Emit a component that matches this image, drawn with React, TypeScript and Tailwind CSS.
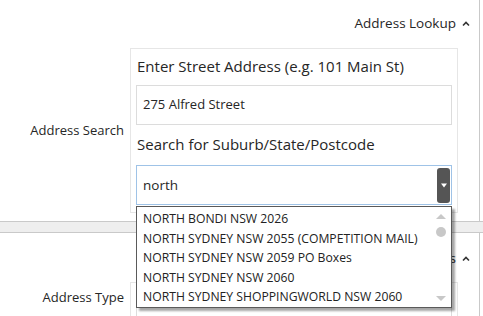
import React from "react";

const suburbs = [
  "NORTH BONDI NSW 2026",
  "NORTH SYDNEY NSW 2055 (COMPETITION MAIL)",
  "NORTH SYDNEY NSW 2059 PO Boxes",
  "NORTH SYDNEY NSW 2060",
  "NORTH SYDNEY SHOPPINGWORLD NSW 2060",
];

function ChevronUp() {
  return (
    <svg width="8" height="6" viewBox="0 0 8 6" className="ml-[6px] mt-[1px]">
      <polyline points="1,4.5 4,1.5 7,4.5" fill="none" stroke="#333" strokeWidth="1.6" />
    </svg>
  );
}

function PanelHeader({ title }: { title: string }) {
  return (
    <div className="flex justify-end items-center pr-[9px] text-[13.5px] leading-[20px]">
      <span>{title}</span>
      <ChevronUp />
    </div>
  );
}

export default function App() {
  return (
    <div className="h-[316px] bg-white text-[#262626] font-['Open_Sans',sans-serif] overflow-hidden">
      {/* Address Lookup panel */}
      <section className="w-[480px] border-r border-[#c9c9c9] pt-[13px] pb-[8px]">
        <PanelHeader title="Address Lookup" />
        <div className="flex mt-[15px]">
          <div className="w-[130px] shrink-0 flex items-center justify-end pr-[6px] text-[13px]">
            Address Search
          </div>
          <div className="w-[328px] border border-[#e6e6e6] px-[5px] pt-[7px] pb-[7px]">
            <div className="text-[15px] leading-[20px] pl-[1px]">Enter Street Address (e.g. 101 Main St)</div>
            <div className="mt-[9px] h-[40px] border border-[#dcdcdc] flex items-center px-[6px] text-[13px]">
              275 Alfred Street
            </div>
            <div className="mt-[9px] text-[15px] leading-[20px] pl-[1px]">Search for Suburb/State/Postcode</div>
            <div className="relative mt-[11px] h-[40px] border border-[#9fc3e7] flex items-center px-[6px] text-[13.5px]">
              north
              <div className="absolute right-[1px] top-[2px] bottom-[1px] w-[13px] rounded-[3px] bg-[#555] flex items-center justify-center">
                <svg width="6" height="5" viewBox="0 0 6 5">
                  <polygon points="0,0.5 6,0.5 3,4.5" fill="#fff" />
                </svg>
              </div>
              {/* suggestion list */}
              <div className="absolute left-[-1px] right-[-1px] top-full mt-[2px] z-10 bg-white border border-[#5a5a5a] shadow-[3px_3px_2px_rgba(0,0,0,0.35)] flex">
                <ul className="flex-1 pt-[2px] text-[12.2px] text-[#222]">
                  {suburbs.map((s) => (
                    <li key={s} className="h-[19.5px] leading-[19.5px] pl-[6px] whitespace-nowrap">
                      {s}
                    </li>
                  ))}
                </ul>
                <div className="w-[16px] mr-[2px] flex flex-col items-center justify-between pt-[7px] pb-[6px]">
                  <div className="flex flex-col items-center gap-[8px]">
                    <svg width="10" height="5" viewBox="0 0 10 5">
                      <polygon points="0,5 10,5 5,0" fill="#c8c8c8" />
                    </svg>
                    <div className="w-[10px] h-[10px] rounded-full bg-[#c8c8c8]" />
                  </div>
                  <svg width="10" height="5" viewBox="0 0 10 5">
                    <polygon points="0,0 10,0 5,5" fill="#c8c8c8" />
                  </svg>
                </div>
              </div>
            </div>
          </div>
        </div>
      </section>

      <div className="h-[12px] border-y border-[#c9c9c9] bg-[#eeeeee]" />

      {/* Address Details panel */}
      <section className="w-[480px] border-r border-[#c9c9c9] pt-[15px] pb-[8px]">
        <PanelHeader title="Address Details" />
        <div className="flex mt-[14px]">
          <div className="w-[130px] shrink-0 flex justify-end pr-[6px] pt-[5px] text-[13px] leading-[20px]">
            Address Type
          </div>
          <div className="w-[328px] border border-[#e6e6e6] px-[5px] py-[6px]">
            <div className="h-[40px] border border-[#dcdcdc]" />
          </div>
        </div>
      </section>
    </div>
  );
}
